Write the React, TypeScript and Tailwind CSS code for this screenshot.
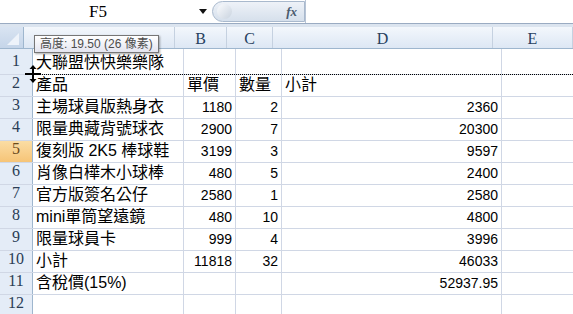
import React from "react";

const cols = [
  { key: "A", w: 151 },
  { key: "B", w: 52 },
  { key: "C", w: 46 },
  { key: "D", w: 220 },
  { key: "E", w: 80 },
];

type Cell = { t: string; num?: boolean };

const rows: { h: number; cells: Cell[] }[] = [
  { h: 26, cells: [{ t: "大聯盟快快樂樂隊" }] },
  { h: 22, cells: [{ t: "產品" }, { t: "單價" }, { t: "數量" }, { t: "小計" }] },
  { h: 22, cells: [{ t: "主場球員版熱身衣" }, { t: "1180", num: true }, { t: "2", num: true }, { t: "2360", num: true }] },
  { h: 22, cells: [{ t: "限量典藏背號球衣" }, { t: "2900", num: true }, { t: "7", num: true }, { t: "20300", num: true }] },
  { h: 22, cells: [{ t: "復刻版 2K5 棒球鞋" }, { t: "3199", num: true }, { t: "3", num: true }, { t: "9597", num: true }] },
  { h: 22, cells: [{ t: "肖像白樺木小球棒" }, { t: "480", num: true }, { t: "5", num: true }, { t: "2400", num: true }] },
  { h: 22, cells: [{ t: "官方版簽名公仔" }, { t: "2580", num: true }, { t: "1", num: true }, { t: "2580", num: true }] },
  { h: 22, cells: [{ t: "mini單筒望遠鏡" }, { t: "480", num: true }, { t: "10", num: true }, { t: "4800", num: true }] },
  { h: 22, cells: [{ t: "限量球員卡" }, { t: "999", num: true }, { t: "4", num: true }, { t: "3996", num: true }] },
  { h: 22, cells: [{ t: "小計" }, { t: "11818", num: true }, { t: "32", num: true }, { t: "46033", num: true }] },
  { h: 22, cells: [{ t: "含稅價(15%)" }, { t: "" }, { t: "" }, { t: "52937.95", num: true }] },
  { h: 22, cells: [] },
];

const cellFont = { fontFamily: '"Liberation Sans", "Noto Sans CJK TC", sans-serif' };
const headFont = { fontFamily: '"Liberation Serif", "DejaVu Serif", serif' };

function FormulaBar() {
  return (
    <div className="flex h-[24px] border-b border-[#9aabc2] bg-white">
      <div className="relative flex w-[212px] items-center">
        <div className="w-[196px] text-center text-[17px] text-black" style={headFont}>
          F5
        </div>
        <svg width="8" height="5" viewBox="0 0 8 5" className="ml-[3px]">
          <path d="M0 0h8L4 5z" fill="#111" />
        </svg>
      </div>
      <div className="flex w-[93px] items-center">
        <div className="flex h-[21px] w-full items-center rounded-l-full border border-[#a9b9cd] bg-gradient-to-b from-[#eef2f8] to-[#d6e0ec] pl-[4px]">
          <div className="h-[15px] w-[15px] rounded-full bg-gradient-to-br from-[#fbfcfe] to-[#c9d3df]" />
          <div className="flex-1" />
          <span className="pr-[7px] text-[13px] font-bold italic text-[#4a5a6e]" style={headFont}>
            fx
          </span>
        </div>
      </div>
      <div className="flex-1 border-l border-[#b7c4d6] bg-white" />
    </div>
  );
}

function HeaderRow() {
  return (
    <div className="flex h-[22px] border-b border-[#9eb6ce]">
      <div className="relative w-[33px] border-r border-[#9eb6ce] bg-gradient-to-b from-[#d9e4f2] to-[#c5d5e9]">
        <svg width="12" height="12" viewBox="0 0 12 12" className="absolute bottom-[3px] right-[4px]">
          <path d="M12 0v12H0z" fill="#eef3fa" />
        </svg>
      </div>
      {cols.map((c) => (
        <div
          key={c.key}
          className="flex shrink-0 items-center justify-center border-r border-[#c5d1e0] bg-gradient-to-b from-[#f3f7fc] to-[#dde7f4] pt-[2px] text-[16px] text-[#27415f]"
          style={{ width: c.w, ...headFont }}
        >
          {/* column A's letter sits under the tooltip */}
          {c.key === "A" ? "" : c.key}
        </div>
      ))}
    </div>
  );
}

export default function App() {
  return (
    <div className="relative h-[314px] w-[573px] overflow-hidden bg-white">
      <FormulaBar />
      <div className="h-[3px] bg-[#dbe4ef]" />
      <HeaderRow />
      {rows.map((r, i) => (
        <div key={i} className="flex border-b border-[#d0d7e5]" style={{ height: r.h }}>
          <div
            className={`flex w-[33px] shrink-0 items-end justify-center border-r border-[#9eb6ce] pb-[1px] text-[16px] ${
              i === 4 ? "bg-gradient-to-b from-[#fbdda4] to-[#f6c477] text-[#6a4a1c]" : "bg-[#e4ecf7] text-[#2a3d55]"
            }`}
            style={headFont}
          >
            {i + 1}
          </div>
          {cols.map((c, ci) => {
            const cell = r.cells[ci];
            return (
              <div
                key={c.key}
                className={`flex shrink-0 items-end whitespace-nowrap border-r border-[#d0d7e5] px-[3px] pb-[1px] text-[16px] leading-[20px] text-black ${
                  cell?.num ? "justify-end" : "justify-start"
                }`}
                style={{ width: c.w, ...cellFont, fontSize: cell?.num ? 14 : 16 }}
              >
                {cell?.t}
              </div>
            );
          })}
        </div>
      ))}

      {/* row resize preview line */}
      <div className="absolute left-[33px] right-0 top-[74px] border-t border-dotted border-black" />

      {/* tooltip */}
      <div
        className="absolute left-[34px] top-[35px] border border-[#767676] bg-gradient-to-b from-white to-[#e4e5f0] px-[5px] text-[12px] leading-[16px] text-[#4c4c4c] shadow-[1px_1px_2px_rgba(0,0,0,0.35)]"
        style={cellFont}
      >
        高度: 19.50 (26 像素)
      </div>

      {/* resize cursor */}
      <svg width="16" height="20" viewBox="0 0 16 20" className="absolute left-[25px] top-[64px]">
        <path d="M8 1L4.5 5h7z M8 19l-3.5-4h7z" fill="#000" />
        <rect x="7" y="4" width="2" height="12" fill="#000" />
        <rect x="0" y="9" width="16" height="2" fill="#000" />
      </svg>
    </div>
  );
}
